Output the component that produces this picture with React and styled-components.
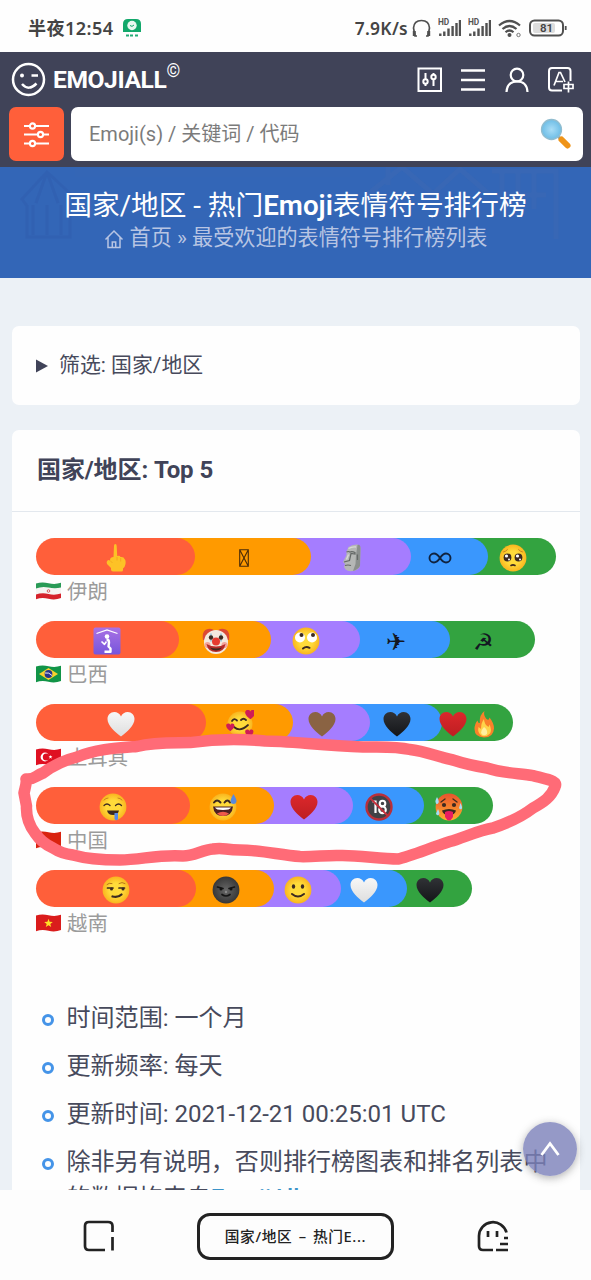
import React from "react";
import styled, { createGlobalStyle } from "styled-components";

const latin = `Roboto, "Noto Sans CJK SC", sans-serif`;
const system = `"Noto Sans", "Noto Sans CJK SC", sans-serif`;

const GlobalStyle = createGlobalStyle`
  *, *::before { box-sizing: border-box; }
  body { margin: 0; background: #fff; font-family: ${latin}; }
  svg { display: block; flex: none; }
`;

const Screen = styled.div`
  position: relative;
  width: 591px;
  height: 1280px;
  overflow: hidden;
  display: flex;
  flex-direction: column;
  background: #ecf1f6;
  color: #474a5c;
`;

/* ---------- system status bar ---------- */
const StatusBar = styled.div`
  height: 52px;
  flex: none;
  display: flex;
  align-items: center;
  justify-content: space-between;
  padding: 4px 24px 0 28px;
  background: #fefefe;
  color: #444;
  font: 600 18.1px/24px ${system};
`;
const StatusGroup = styled.div`
  display: flex;
  align-items: center;
  gap: ${(p) => p.$gap || 0}px;
  white-space: nowrap;
`;
const Clock = styled.span`
  letter-spacing: 0.4px;
`;
const Speed = styled.span`
  margin-right: -3px;
  font-size: 17.4px;
  letter-spacing: 0.3px;
`;

/* ---------- site header ---------- */
const Header = styled.header`
  height: 115px;
  flex: none;
  background: #404358;
  padding: 0 8px 0 9px;
  color: #fff;
`;
const NavRow = styled.div`
  height: 55px;
  display: flex;
  align-items: center;
  justify-content: space-between;
  padding: 0 9px 0 2px;
`;
const Brand = styled.div`
  display: flex;
  align-items: center;
  gap: 7px;
  font: 700 24.6px/30px Roboto, sans-serif;
  letter-spacing: -0.4px;
  sup {
    font-size: 17.5px;
    font-weight: 400;
    line-height: 0;
    vertical-align: 11px;
  }
`;
const NavIcons = styled.nav`
  display: flex;
  align-items: center;
  gap: 17.5px;
`;
const SearchRow = styled.div`
  display: flex;
  gap: 7px;
  height: 54px;
`;
const FilterButton = styled.button`
  width: 55px;
  border: 0;
  border-radius: 7px;
  padding: 0;
  display: grid;
  place-items: center;
  background: #ff5f3a;
`;
const SearchBox = styled.div`
  flex: 1;
  display: flex;
  align-items: center;
  justify-content: space-between;
  padding: 0 11px 0 18px;
  border-radius: 7px;
  background: #fff;
  color: #7b7b7b;
  font-size: 20px;
  span { padding-bottom: 4px; }
`;

/* ---------- hero ---------- */
const Hero = styled.section`
  position: relative;
  height: 111px;
  flex: none;
  padding-top: 21px;
  background: #3366b7;
  text-align: center;
  white-space: nowrap;
`;
const HeroArt = styled.svg`
  position: absolute;
  inset: 0;
`;
const Title = styled.h1`
  position: relative;
  margin: 0;
  color: #fff;
  font-size: 27.7px;
  line-height: 35px;
  font-weight: 400;
  b { font-weight: 600; }
`;
const Crumbs = styled.div`
  position: relative;
  display: flex;
  align-items: center;
  justify-content: center;
  gap: 6px;
  color: #b8c5e3;
  font-size: 21.1px;
  line-height: 30px;
`;

/* ---------- content ---------- */
const Content = styled.main`
  flex: 1;
  min-height: 0;
  overflow: hidden;
  padding: 48px 11px 0 12px;
  display: flex;
  flex-direction: column;
  gap: 24.5px;
`;
const Card = styled.section`
  flex: none;
  border-radius: 7px;
  background: #fefefe;
`;
const FilterCard = styled(Card)`
  height: 79px;
  display: flex;
  align-items: center;
  gap: 11px;
  padding: 0 24px;
  font-size: 20.9px;
  span { padding-bottom: 5px; }
`;
const CardTitle = styled.h2`
  margin: 0;
  height: 82px;
  padding: 0 25px;
  border-bottom: 1px solid #e3e8ee;
  font-size: 24px;
  line-height: 81px;
  font-weight: 700;
  letter-spacing: -0.1px;
  color: #404358;
`;
const Chart = styled.div`
  padding: 26.6px 24px 0;
  height: 472px;
`;
const ChartRow = styled.div`
  height: 83.1px;
`;
const Bar = styled.div`
  display: flex;
  height: 37px;
  isolation: isolate;
`;
const Segment = styled.div`
  position: relative;
  width: ${(p) => p.$width}px;
  margin-left: ${(p) => (p.$first ? 0 : -18.5)}px;
  display: flex;
  align-items: center;
  justify-content: center;
  gap: 3px;
  padding-top: 2.5px;
  &::before {
    content: "";
    position: absolute;
    inset: 0;
    z-index: ${(p) => p.$layer};
    border-radius: ${(p) => (p.$first ? "18.5px" : "0 18.5px 18.5px 0")};
    background: ${(p) => p.$color};
  }
  > * {
    position: relative;
    z-index: 6;
  }
`;
const Glyph = styled.span`
  padding-top: 2px;
  color: #131722;
  font: ${(p) => p.$size || 26}px/30px "DejaVu Sans", sans-serif;
`;
const Country = styled.div`
  display: flex;
  align-items: center;
  gap: 6px;
  height: 32px;
  color: #9b9b9b;
  font-size: 20.4px;
  span { padding-bottom: 2px; }
`;
const Notes = styled.ul`
  list-style: none;
  margin: 0;
  padding: 16px 24px 0 30px;
  font-size: 24.05px;
  line-height: 36.2px;
`;
const Note = styled.li`
  display: flex;
  gap: 12.5px;
  margin-bottom: 12px;
  white-space: nowrap;
  &::before {
    content: "";
    flex: none;
    width: 12px;
    height: 12px;
    margin-top: 14px;
    border: 3.5px solid #4594e8;
    border-radius: 50%;
  }
  a { color: #3c94c9; font-weight: 500; }
`;

/* ---------- browser bar ---------- */
const BrowserBar = styled.footer`
  position: relative;
  height: 90px;
  flex: none;
  display: flex;
  align-items: center;
  justify-content: space-between;
  padding: 2px 82px 0 83px;
  background: #fdfdfd;
`;
const TabPill = styled.div`
  width: 197px;
  height: 47px;
  margin-left: -1px;
  border: 3px solid #222;
  border-radius: 13px;
  display: grid;
  place-items: center;
  color: #222;
  font: 500 14.7px/20px ${system};
  letter-spacing: 0.6px;
  word-spacing: 2px;
  white-space: nowrap;
`;

const ToTop = styled.button`
  position: absolute;
  z-index: 10;
  right: 14px;
  bottom: 104px;
  width: 54px;
  height: 54px;
  padding: 0;
  border: 0;
  border-radius: 50%;
  display: grid;
  place-items: center;
  background: rgba(122, 128, 185, 0.8);
  box-shadow: 0 2px 8px rgba(60, 60, 60, 0.4);
`;
const Marker = styled.svg`
  position: absolute;
  z-index: 11;
  left: 0;
  top: 730px;
  pointer-events: none;
`;
const SharedPaint = styled.svg`
  position: absolute;
`;

/* ---------- emoji drawings, 28 x 28 ---------- */
const ink = "#3d2a20";
const line = { fill: "none", stroke: ink, strokeWidth: 1.6, strokeLinecap: "round" };

const Em = ({ children }) => (
  <svg width="28" height="28" viewBox="0 0 28 28">{children}</svg>
);
const Face = ({ children, paint = "url(#sun)" }) => (
  <Em><circle cx="14" cy="14" r="13.4" fill={paint} />{children}</Em>
);
const heartPath = "M14 26.5C8 22 .5 15.5.5 9 .5 5 3.500 2 7.300 2 10.200 2 12.800 3.600 14 6.500 15.200 3.600 17.800 2 20.700 2 24.500 2 27.500 5 27.500 9 27.500 15.500 20 22 14 26.500Z";
const Heart = ({ paint }) => <Em><path d={heartPath} fill={paint} /></Em>;

const emoji = {
  finger: () => (
    <Em>
      <path d="M12 2Q12 0 13.300 0T14.700 2L15.200 12Q18 11 18.500 13 22 12.500 22.500 15 24 16 23.500 20 23 23 21 24.500V26Q21 27.500 19.500 27.500H11Q9 27.500 9 25.500V24L5 20Q4 17.500 5.500 16.500 6.500 15.500 8 16.500 7.800 13 11.500 13Z" fill="#fdc226" />
      <path d="M15 13v3.500M18.700 14v3.500M8 16.500l2.500 2.500" fill="none" stroke="#f1a31d" strokeWidth=".8" />
    </Em>
  ),
  tofu: () => (
    <svg width="10" height="18" viewBox="0 0 10 18">
      <path d="M.7.7h8.600v16.600H.7ZM.7.7l8.600 16.600M9.300.7L.7 17.300" fill="none" stroke="#4c2c08" strokeWidth="1.100" />
    </svg>
  ),
  moai: () => (
    <Em>
      <path d="M10.500 3Q14 .3 19 .5 22.500 1 22.500 4L22 22Q21 25 17 26.500 11 28.500 7.500 25.500L6 23 7 20 5 18 8.500 11 8.500 7.500Z" fill="#b5b7b5" />
      <path d="M19.500 1Q22.500 0 22.500 4.500L22 22Q20 25.500 15 27L17.500 20 18 11Z" fill="#8b8f8d" />
      <path d="M8.500 8Q10.500 7 12 8 14 7 17 8.500V10L13 9.500 11.500 16.500 6 18M7 21.500Q10 20.500 13 21.500M19.500 10.500V16" fill="none" stroke="#646866" strokeWidth="1.200" />
      <path d="M10.500 4.500Q14 2.500 18 3M10.500 10.500L8.500 15.500" fill="none" stroke="#d6d8d6" strokeWidth="1.400" />
    </Em>
  ),
  pleading: () => (
    <Face>
      <circle cx="8.500" cy="13.500" r="3.900" fill={ink} /><circle cx="19.500" cy="13.500" r="3.900" fill={ink} />
      <circle cx="7.500" cy="12" r="1.600" fill="#fff" /><circle cx="18.500" cy="12" r="1.600" fill="#fff" />
      <circle cx="10" cy="15.500" r="1" fill="#fff" /><circle cx="21" cy="15.500" r="1" fill="#fff" />
      <path d="M4.500 8Q7 7.500 8.500 5.500M23.500 8Q21 7.500 19.500 5.500" {...line} stroke="#c98520" strokeWidth="1" />
      <path d="M12 21.500Q14 20.300 16 21.500" {...line} />
    </Face>
  ),
  worship: () => (
    <Em>
      <rect x=".5" y=".5" width="27" height="27" rx="2" fill="url(#violet)" />
      <path d="M3.500 6.500L14 3 24.500 6.500" fill="none" stroke="#fff" strokeWidth="1.300" />
      <circle cx="14" cy="9.500" r="2.300" fill="#fff" />
      <path d="M13.500 12.500Q16 12.500 16 15.500L15.500 19.500 17.500 21.500V24.800H11.500" fill="none" stroke="#fff" strokeWidth="2.400" strokeLinejoin="round" />
      <path d="M13.500 14.500L11.500 17.300 8.500 14.500" fill="none" stroke="#fff" strokeWidth="1.600" strokeLinejoin="round" />
    </Em>
  ),
  clown: () => (
    <Em>
      <path d="M1 13Q-.5 3 6 2 11 1 13 5H15Q17 1 22 2 28.500 3 27 13Z" fill="#dc4935" />
      <ellipse cx="14" cy="15" rx="12" ry="12" fill="#f4e9df" />
      <circle cx="5.500" cy="18" r="3" fill="#f4a59b" /><circle cx="22.500" cy="18" r="3" fill="#f4a59b" />
      <path d="M9 6.500v8M19 6.500v8" stroke="#8dbfd8" strokeWidth="1.500" />
      <circle cx="9" cy="10.500" r="2.200" fill={ink} /><circle cx="19" cy="10.500" r="2.200" fill={ink} />
      <path d="M4.500 17Q14 22 23.500 17 22 25 14 25T4.500 17Z" fill="#b72c2a" />
      <path d="M8 20.500Q14 22.500 20 20.500 18 23.500 14 23.500T8 20.500Z" fill={ink} />
      <circle cx="14" cy="14.500" r="4" fill="#e63b30" />
    </Em>
  ),
  rolling: () => (
    <Face>
      <circle cx="8" cy="10.500" r="5" fill="#fff" /><circle cx="20" cy="10.500" r="5" fill="#fff" />
      <circle cx="9.500" cy="8" r="2" fill={ink} /><circle cx="21" cy="8" r="2" fill={ink} />
      <path d="M11 21.500Q14 19 17.500 20.800" {...line} strokeWidth="2" />
    </Face>
  ),
  loving: () => (
    <Em>
      <circle cx="14" cy="14" r="12.500" fill="url(#sun)" />
      <path d="M6 11Q8 7.500 11 10.500M15 10Q17.500 7.500 20 10M8 17Q14 22.500 22 15" {...line} strokeWidth="1.800" />
      {[[19, -1, 10], [0, 13, 8], [19, 19, 8]].map(([x, y, s]) => (
        <path key={`${x}-${y}`} d={heartPath} fill="#cf1c57" transform={`translate(${x} ${y}) scale(${s / 26})`} />
      ))}
    </Em>
  ),
  fire: () => (
    <Em>
      <path d="M14.500 1Q13 5 16.500 9 19 11 19.500 7.500 24 13 24 18.500 23.500 27.500 14 27.500 4.500 27 4.500 19 4.500 14 7.500 10.500 8 13.500 9.800 13 9 5 14.500 1Z" fill="#f9812a" />
      <path d="M14 9Q14 14 18.500 17L19.500 14.500Q22 20 20 23.500 17 27 12 26 7 23 8.500 17L11 19Q11 13 14 9Z" fill="#ffd34a" />
      <path d="M14 17Q18 20 17 24 13 27 11 23 11 20 14 17Z" fill="#fff0a0" />
    </Em>
  ),
  drool: () => (
    <Face>
      <path d="M5 12.500Q8 9.500 11 12.500M16.500 12.500Q19.500 9.500 22.500 12.500" {...line} strokeWidth="1.300" />
      <path d="M5 7Q7 5 9 5M19 5Q21 5 23 7" {...line} stroke="#c98520" strokeWidth="1" />
      <path d="M8 17.500H20Q19 22 14 22T8 17.500Z" fill={ink} />
      <path d="M15.500 20H19V26Q17.500 28.500 15.500 26Z" fill="#5889e9" />
    </Face>
  ),
  sweat: () => (
    <Face>
      <path d="M5 9.500Q8 5.500 11.500 9.500M15.500 9.500Q18.500 5.500 21 9.500" {...line} strokeWidth="2" />
      <path d="M4 13.500H24Q23 23 14 23T4 13.500Z" fill="#4c2022" />
      <path d="M6 14.500H22Q21 17 14 17T6 14.500Z" fill="#fff" />
      <path d="M8 20.500Q14 17 20 20.500 17 23 14 23T8 20.500Z" fill="#ed594b" />
      <path d="M24.500 1Q28 7 27.500 8.500 27 11 24.500 11T21.500 8.500Q21.500 6 24.500 1Z" fill="#598adc" />
    </Face>
  ),
  adult: () => (
    <Em>
      <circle cx="14" cy="14" r="12.500" fill="#414247" stroke="#b9303b" strokeWidth="2.400" />
      <path d="M7.500 8.500H10.500V20" fill="none" stroke="#fff" strokeWidth="2.200" />
      <circle cx="17.500" cy="10.500" r="2.800" fill="none" stroke="#fff" strokeWidth="2.100" />
      <circle cx="17.500" cy="16.800" r="3.300" fill="none" stroke="#fff" strokeWidth="2.100" />
      <path d="M5.500 5.500l17 17" stroke="#c5303c" strokeWidth="1.800" />
    </Em>
  ),
  hot: () => (
    <Face paint="url(#heat)">
      <path d="M6 9L10 6M22 9L18 6" {...line} strokeWidth="1.300" />
      <circle cx="9" cy="12" r="2.100" fill={ink} /><circle cx="19" cy="12" r="2.100" fill={ink} />
      <path d="M7 17.500Q14 14.500 21 17.500 20 22 14 22T7 17.500Z" fill={ink} />
      <path d="M10 19Q14 17 18 19V24Q16 27.500 14 27.500T10 24Z" fill="#e91d61" />
      <path d="M2 4Q5 9 3 10.500T.5 9Q0 8 2 4ZM25.500 10Q28 15 26.500 16T24 15ZM3 16Q5.500 21 3.500 22T1 20.500Z" fill="#a5dcf2" />
    </Face>
  ),
  smirk: () => (
    <Face>
      <path d="M5 8.500Q7 6.500 10 7.500M17 7.500Q20 5.500 23 7.500" {...line} stroke="#b87819" strokeWidth="1" />
      <path d="M5.500 12H11M17 12H22.500" {...line} strokeWidth="1.700" />
      <circle cx="9.500" cy="13" r="1.500" fill={ink} /><circle cx="21" cy="13" r="1.500" fill={ink} />
      <path d="M10.500 20.500Q16 22 19.500 18.500" {...line} strokeWidth="2.300" />
    </Face>
  ),
  moon: () => (
    <Face paint="url(#night)">
      <path d="M5.500 11L11 12.500M17 12.500L22.500 11M10 18.500Q14 21.500 18 18.500" {...line} stroke="#151515" strokeWidth="1.700" />
      <circle cx="9" cy="13" r="1.500" fill="#111" /><circle cx="19" cy="13" r="1.500" fill="#111" />
      <circle cx="14" cy="16" r="1.200" fill="#8a8a8a" />
    </Face>
  ),
  smile: () => (
    <Face>
      <ellipse cx="9.500" cy="10.500" rx="1.700" ry="2.200" fill={ink} /><ellipse cx="18.500" cy="10.500" rx="1.700" ry="2.200" fill={ink} />
      <path d="M8 18Q14 23 20 18" {...line} strokeWidth="2" />
    </Face>
  ),
  white: () => <Heart paint="url(#pearl)" />,
  brown: () => <Heart paint="#8a6343" />,
  black: () => <Heart paint="url(#coal)" />,
  red: () => <Heart paint="url(#ruby)" />,
  infinity: () => (
    <svg width="24" height="12" viewBox="0 0 24 12">
      <path d="M12 6C10 3 8.500 1.500 6 1.500A4.500 4.500 0 0 0 6 10.500C8.500 10.500 10 9 12 6S15.500 1.500 18 1.500A4.500 4.500 0 0 1 18 10.500C15.500 10.500 14 9 12 6Z" fill="none" stroke="#10233f" strokeWidth="1.900" />
    </svg>
  ),
  plane: () => <Glyph $size={24}>✈</Glyph>,
  sickle: () => <Glyph $size={23}>☭</Glyph>,
};

const flagShape = "M0 1.500Q6 -.5 12.500 1.200T25 .8V16Q19 18.500 12.500 16.800T0 17.200Z";
const Flag = ({ base, children, id }) => (
  <svg width="25" height="18" viewBox="0 0 25 18">
    <clipPath id={`flag-${id}`}><path d={flagShape} /></clipPath>
    <g clipPath={`url(#flag-${id})`}><rect width="25" height="18" fill={base} />{children}</g>
  </svg>
);
const starPath = "M0-4.500L1.100-1.500 4.300-1.400 1.800.6 2.700 3.700 0 1.900-2.700 3.700-1.800.6-4.300-1.400-1.100-1.500Z";
const flags = {
  iran: (
    <Flag id="iran" base="#f5f4f2">
      <path d="M0 0H25V5.500Q19 7 12.500 5.500T0 6.500Z" fill="#2a9b57" />
      <path d="M0 12.500Q6 10.500 12.500 12T25 11.500V18H0Z" fill="#d5222b" />
      <circle cx="12.500" cy="9" r="1.300" fill="none" stroke="#d54950" strokeWidth=".9" />
    </Flag>
  ),
  brazil: (
    <Flag id="brazil" base="#119447">
      <path d="M3 9L12.500 3 22 9 12.500 15Z" fill="#f7d22d" />
      <circle cx="12.500" cy="9" r="3.900" fill="#26358c" />
      <path d="M9 8Q13 7 16 10.500" fill="none" stroke="#fff" strokeWidth=".9" />
    </Flag>
  ),
  turkey: (
    <Flag id="turkey" base="#df1021">
      <circle cx="9" cy="9" r="4.400" fill="#fff" /><circle cx="10.300" cy="9" r="3.500" fill="#df1021" />
      <path d={starPath} transform="translate(14.500 9) scale(.45)" fill="#fff" />
    </Flag>
  ),
  china: <Flag id="china" base="#d9230f" />,
  vietnam: (
    <Flag id="vietnam" base="#da1c1c">
      <path d={starPath} transform="translate(12.500 9.300)" fill="#ffe227" />
    </Flag>
  ),
};

const palette = ["#ff5f3a", "#ff9a00", "#a57dff", "#3a97fd", "#33a340"];
const rows = [
  { name: "伊朗", flag: "iran", widths: [159.5, 134.5, 118.500, 95.500, 86.500], items: ["finger", "tofu", "moai", "infinity", "pleading"] },
  { name: "巴西", flag: "brazil", widths: [142.500, 111, 107.500, 108.500, 103.500], items: ["worship", "clown", "rolling", "plane", "sickle"] },
  { name: "土耳其", flag: "turkey", widths: [169.500, 106, 95, 91, 89.500], items: ["white", "loving", "brown", "black", ["red", "fire"]] },
  { name: "中国", flag: "china", widths: [154, 102.500, 97.500, 89.500, 87.500], items: ["drool", "sweat", "red", "adult", "hot"] },
  { name: "越南", flag: "vietnam", widths: [160, 96, 85.500, 84.500, 83.500], items: ["smirk", "moon", "smile", "white", "black"] },
];

const iconStroke = { fill: "none", stroke: "#fff", strokeWidth: 2 };

const Signal = () => (
  <svg width="23" height="22" viewBox="0 -2 23 22">
    <text x="0" y="6.300" fontSize="8.300" fontWeight="700" fontFamily="Roboto, sans-serif" fill="#555">HD</text>
    <path d="M2.300 17v-2.500M6.300 17v-4.500M10.500 17V9.500M14.600 17V7M18.500 17V4M22 17V1" stroke="#505050" strokeWidth="2.400" />
  </svg>
);

export default function App() {
  return (
    <Screen>
      <GlobalStyle />
      <SharedPaint width="0" height="0">
        <defs>
          <radialGradient id="sun"><stop offset=".5" stopColor="#ffdb3a" /><stop offset="1" stopColor="#f9b51f" /></radialGradient>
          <radialGradient id="night"><stop offset="0" stopColor="#666" /><stop offset="1" stopColor="#383838" /></radialGradient>
          <linearGradient id="heat" x2="0" y2="1"><stop offset="0" stopColor="#e8532d" /><stop offset="1" stopColor="#ffae2f" /></linearGradient>
          <linearGradient id="violet" x2="0" y2="1"><stop offset="0" stopColor="#aa72e4" /><stop offset="1" stopColor="#7655dc" /></linearGradient>
          <linearGradient id="pearl" x2="0" y2="1"><stop offset="0" stopColor="#f7f7f7" /><stop offset="1" stopColor="#dedede" /></linearGradient>
          <linearGradient id="coal" x2="0" y2="1"><stop offset="0" stopColor="#303236" /><stop offset="1" stopColor="#141518" /></linearGradient>
          <linearGradient id="ruby" x2="0" y2="1"><stop offset="0" stopColor="#dc282b" /><stop offset="1" stopColor="#bd1e22" /></linearGradient>
          <radialGradient id="lens"><stop offset="0" stopColor="#a9ddf6" /><stop offset="1" stopColor="#6dbde6" /></radialGradient>
        </defs>
      </SharedPaint>

      <StatusBar>
        <StatusGroup $gap={9}>
          <Clock>半夜12:54</Clock>
          <svg width="20" height="19" viewBox="0 0 20 19">
            <path d="M1 13V5Q1 0 6 0H14Q19 0 19 5V13Z" fill="#12a86b" />
            <circle cx="10" cy="6.500" r="4.700" fill="#e8f8f0" /><path d="M8 6.500Q10 8.500 12 6" fill="none" stroke="#12a86b" />
            <path d="M4 16.500h3M8 16.500h3M13 16.500h3" stroke="#24ac76" strokeWidth="2" />
          </svg>
        </StatusGroup>
        <StatusGroup $gap={7}>
          <Speed>7.9K/s</Speed>
          <svg width="19" height="19" viewBox="0 0 19 19">
            <path d="M5 17H3L1.500 9Q2 1.500 9.500 1.500T17.500 9L16 17H14" fill="none" stroke="#505050" strokeWidth="1.700" />
            <path d="M2.300 12V17M16.700 12V17" stroke="#505050" strokeWidth="3" />
          </svg>
          <Signal />
          <Signal />
          <svg width="24" height="19" viewBox="0 0 24 19">
            <path d="M1 6.500Q11.500-2.500 22 6.500M4.500 10Q11.500 4 18.500 10M7.500 13.300Q11.500 9.700 15.500 13.300" fill="none" stroke="#505050" strokeWidth="2.200" />
            <circle cx="11.500" cy="16" r="2" fill="#505050" /><circle cx="20.500" cy="16" r="1.700" fill="none" stroke="#777" />
          </svg>
          <svg width="38" height="18" viewBox="0 0 38 18">
            <rect x="1" y="1.500" width="33" height="15" rx="4.500" fill="#fff" stroke="#505050" strokeWidth="2" />
            <rect x="4" y="4" width="22" height="10" rx="2" fill="#ddd" />
            <path d="M36.700 7v4" stroke="#505050" strokeWidth="1.800" />
            <text x="17.500" y="13.200" textAnchor="middle" fontSize="11.500" fontWeight="600" fontFamily="Roboto, sans-serif" fill="#444">81</text>
          </svg>
        </StatusGroup>
      </StatusBar>

      <Header>
        <NavRow>
          <Brand>
            <svg width="35" height="35" viewBox="0 0 35 35">
              <circle cx="17.500" cy="17.500" r="15.500" {...iconStroke} strokeWidth="2.500" />
              <circle cx="11" cy="13.500" r="2" fill="#fff" />
              <path d="M20.500 13.500H27M11 22Q17.500 29.500 25.500 21.500" {...iconStroke} strokeWidth="2.500" />
            </svg>
            <span>EMOJIALL<sup>©</sup></span>
          </Brand>
          <NavIcons>
            <svg width="26" height="26" viewBox="0 0 26 26">
              <rect x="1.500" y="1.500" width="22.500" height="22.500" {...iconStroke} />
              <path d="M8.500 6V12M8.500 17V19M16.500 6V8M16.500 12V19" {...iconStroke} />
              <circle cx="8.500" cy="14.500" r="2.200" {...iconStroke} /><circle cx="16.500" cy="10" r="2.200" {...iconStroke} />
            </svg>
            <svg width="26" height="26" viewBox="0 0 26 26">
              <path d="M1 3.500H25M1 13H25M1 22.500H25" {...iconStroke} strokeWidth="2.300" />
            </svg>
            <svg width="26" height="26" viewBox="0 0 26 26">
              <circle cx="13" cy="8" r="6.300" {...iconStroke} strokeWidth="2.200" />
              <path d="M2.500 25Q3 14.500 13 14.500T23.500 25" {...iconStroke} strokeWidth="2.200" />
            </svg>
            <svg width="27" height="26" viewBox="0 0 27 26">
              <path d="M15 23.500H5Q2 23.500 2 20.500V4Q2 1 5 1H20.500Q23.500 1 23.500 4V14" {...iconStroke} />
              <path d="M7 18.500L12 5.500H13.500L18 15M9 14.500H16M17 17.500H26V21.500H17ZM21.500 14.500V25.500" {...iconStroke} strokeWidth="1.700" />
            </svg>
          </NavIcons>
        </NavRow>
        <SearchRow>
          <FilterButton>
            <svg width="27" height="27" viewBox="0 0 27 27">
              <path d="M1 5H26M1 13.500H26M1 22.500H26" {...iconStroke} strokeWidth="2.200" />
              <g fill="#ff5f3a" stroke="#fff" strokeWidth="2.100">
                <circle cx="9.500" cy="5" r="2.600" /><circle cx="17.500" cy="13.500" r="2.600" /><circle cx="9.500" cy="22.500" r="2.600" />
              </g>
            </svg>
          </FilterButton>
          <SearchBox>
            <span>Emoji(s) / 关键词 / 代码</span>
            <svg width="32" height="32" viewBox="0 0 32 32">
              <path d="M17.500 18L22 22" stroke="#8ca2ad" strokeWidth="3" />
              <path d="M21.500 21.500L27.500 27.500" stroke="#ef9418" strokeWidth="6" strokeLinecap="round" />
              <circle cx="11.500" cy="11.500" r="10" fill="url(#lens)" stroke="#92bdcf" strokeWidth="1.300" />
            </svg>
          </SearchBox>
        </SearchRow>
      </Header>

      <Hero>
        <HeroArt width="591" height="111" viewBox="0 0 591 111" fill="none">
          <path d="M22 32L47 5 75 31 70 39V70H27V39ZM33 38V68M47 38V68M61 38V68M47 5L36 36M47 5L58 36" stroke="#2d57a8" strokeWidth="3" opacity=".3" />
          <path d="M367 28L402 0 433 27 460 2 490 28M388 18V0M492 4H556V72M497 28H546M502 4V42M518 4V42M534 4V42" stroke="#526fae" strokeWidth="5" opacity=".18" />
          <path d="M75 6H350M92 48H510" stroke="#4970b1" strokeWidth="8" opacity=".1" />
        </HeroArt>
        <Title>国家/地区 - 热门<b>Emoji</b>表情符号排行榜</Title>
        <Crumbs>
          <svg width="20" height="21" viewBox="0 0 20 21">
            <path d="M1.500 11.500L10 3 18.500 11.500M4 9.500V19.500H16V9.500M8.300 19V14H11.700V19" fill="none" stroke="#b8c5e3" strokeWidth="1.500" />
          </svg>
          <span>首页 » 最受欢迎的表情符号排行榜列表</span>
        </Crumbs>
      </Hero>

      <Content>
        <FilterCard>
          <svg width="12" height="14" viewBox="0 0 12 14"><path d="M0 .5L12 7 0 13.500Z" fill="#404358" /></svg>
          <span>筛选: 国家/地区</span>
        </FilterCard>
        <Card>
          <CardTitle>国家/地区: Top 5</CardTitle>
          <Chart>
            {rows.map((row) => (
              <ChartRow key={row.name}>
                <Bar>
                  {row.items.map((item, i) => (
                    <Segment key={i} $first={i === 0} $layer={5 - i} $width={row.widths[i]} $color={palette[i]}>
                      {[].concat(item).map((name) => {
                        const Drawing = emoji[name];
                        return <Drawing key={name} />;
                      })}
                    </Segment>
                  ))}
                </Bar>
                <Country>{flags[row.flag]}<span>{row.name}</span></Country>
              </ChartRow>
            ))}
          </Chart>
          <Notes>
            <Note>时间范围: 一个月</Note>
            <Note>更新频率: 每天</Note>
            <Note>更新时间: 2021-12-21 00:25:01 UTC</Note>
            <Note><span>除非另有说明，否则排行榜图表和排名列表中<br />的数据均来自<a>EmojiAll</a>。</span></Note>
          </Notes>
        </Card>
      </Content>

      <BrowserBar>
        <svg width="32" height="32" viewBox="0 0 32 32">
          <path d="M22 30H6Q2 30 2 26V6Q2 2 6 2H25Q29.500 2 29.500 6V12M29.500 17V30.500" fill="none" stroke="#222" strokeWidth="2.700" />
        </svg>
        <TabPill>国家/地区 – 热门E...</TabPill>
        <svg width="32" height="32" viewBox="0 0 32 32">
          <path d="M16 30H6Q2 30 2 26V16A14 14 0 0 1 29.500 12.500" fill="none" stroke="#222" strokeWidth="2.700" />
          <path d="M11 11V17M20 11V17M27 18H31M23 24H31M19 30H31" fill="none" stroke="#222" strokeWidth="2.700" />
        </svg>
      </BrowserBar>

      <ToTop>
        <svg width="20" height="16" viewBox="0 0 20 16"><path d="M1.500 14L10 2.500 18.500 14" fill="none" stroke="#fff" strokeWidth="2.800" /></svg>
      </ToTop>
      <Marker width="591" height="140" viewBox="0 730 591 140">
        <path d="M26 779C34 780 35 776 43 773C54 765 65 760 77 757C96 749 117 748 137 746.500C155 742 172 743 190 742.600C215 739 244 739 265 741C285 741 320 745 363 747C380 747 395 746 410 749.500C425 751 438 757 453 760C465 764 475 766 487 768C505 774 520 773 533 775.600C550 780 558 781 555 787C551 797 544 802 533 808C520 818 505 824 493 828C480 830 465 837 450 841.600C430 848 409 857 398 859C380 859 358 855 340 855.500C327 855 314 857 300 856.600C280 855 260 850 240 850C225 850 223 847 213 849C202 850 194 856 183 856C160 854 140 860 120 860C103 860 87 859 73 855C65 854 59 852 53 848C44 844 39 839 35 833C28 824 26 816 26.500 806L24 793C25 788 27 783 26 779" fill="none" stroke="#ff6b77" strokeWidth="11.500" strokeLinecap="round" strokeLinejoin="round" />
      </Marker>
    </Screen>
  );
}
